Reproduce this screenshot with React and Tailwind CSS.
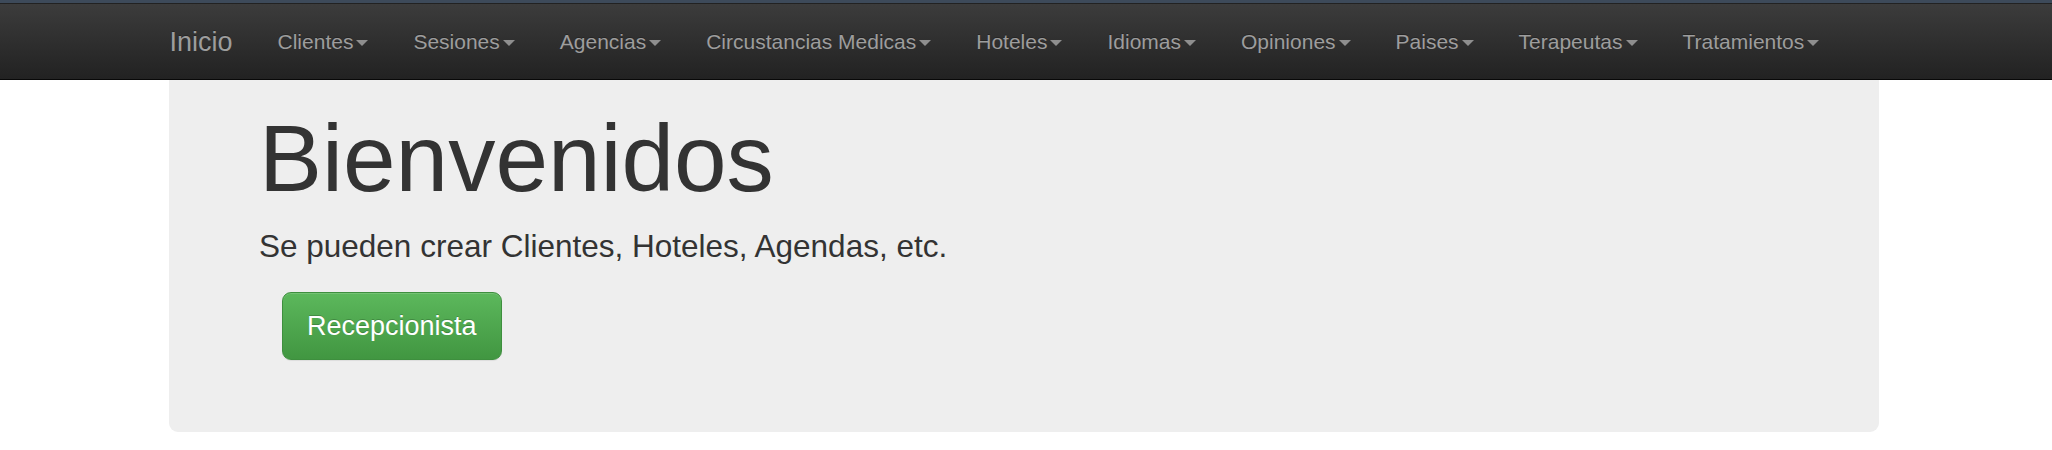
const menus = [
  "Clientes",
  "Sesiones",
  "Agencias",
  "Circustancias Medicas",
  "Hoteles",
  "Idiomas",
  "Opiniones",
  "Paises",
  "Terapeutas",
  "Tratamientos",
];

const Caret = () => (
  <span className="ml-[3px] mt-[3px] inline-block h-0 w-0 border-x-[6px] border-t-[6px] border-x-transparent border-t-[#8f8f8f] align-middle" />
);

export default function App() {
  return (
    <div className="min-h-[450px] bg-white font-['Liberation_Sans',Arial,sans-serif] text-[#333]">
      {/* top strip */}
      <div className="h-[3px] bg-[#3d4a5a]" />

      {/* NAVBAR */}
      <nav className="h-[77px] border-b-[1.5px] border-t-[1.5px] border-b-[#080808] border-t-[#222] bg-gradient-to-b from-[#3c3c3c] to-[#222]">
        <div className="ml-[147px] flex items-start">
          <a className="px-[22.5px] py-[22.5px] text-[27px] leading-[30px] text-[#9d9d9d] [text-shadow:0_-1px_0_rgba(0,0,0,0.25)]">
            Inicio
          </a>
          {menus.map((m) => (
            <a
              key={m}
              className="flex items-center whitespace-nowrap px-[22.5px] py-[22.5px] text-[21px] leading-[30px] text-[#9d9d9d] [text-shadow:0_-1px_0_rgba(0,0,0,0.25)]"
            >
              {m}
              <Caret />
            </a>
          ))}
        </div>
      </nav>

      {/* JUMBOTRON */}
      <div className="ml-[169px] w-[1710px] rounded-b-[9px] bg-[#eeeeee] pb-[72px] pl-[90px] pr-[90px] pt-[26px]">
        <h1 className="mb-[14px] text-[94.5px] font-normal leading-[104px] text-[#333]">
          Bienvenidos
        </h1>
        <p className="mb-[23px] text-[31.5px] leading-[45px] text-[#333]">
          Se pueden crear Clientes, Hoteles, Agendas, etc.
        </p>
        <div className="ml-[23px]">
          <button className="h-[68px] rounded-[9px] border-[1.5px] border-[#3e8f3e] bg-gradient-to-b from-[#5cb85c] to-[#419641] px-[24px] text-[27px] leading-[40px] text-white shadow-[inset_0_1px_0_rgba(255,255,255,0.15),0_1px_1px_rgba(0,0,0,0.075)] [text-shadow:0_-1px_0_rgba(0,0,0,0.2)]">
            Recepcionista
          </button>
        </div>
      </div>
    </div>
  );
}
